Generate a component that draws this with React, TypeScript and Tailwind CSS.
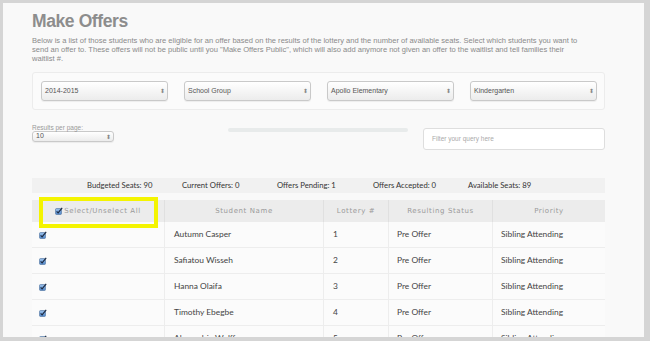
import React from "react";

const Check = () => (
  <svg width="8" height="8" viewBox="0 0 8 8" className="shrink-0">
    <defs>
      <linearGradient id="cb" x1="0" y1="0" x2="0" y2="1">
        <stop offset="0" stopColor="#9cc2ec" />
        <stop offset="1" stopColor="#4f86c9" />
      </linearGradient>
    </defs>
    <rect x="0.5" y="1.5" width="6" height="6" rx="1" fill="url(#cb)" stroke="#4b6e9c" strokeWidth="0.6" />
    <path d="M1.6 4.4 L3.1 5.9 L7.2 0.8" fill="none" stroke="#1d2c44" strokeWidth="1.2" />
  </svg>
);

const Select = ({ label, w = "w-[127px]", h = "h-[20px]" }: { label: string; w?: string; h?: string }) => (
  <div
    className={`${w} ${h} flex items-center rounded-[3px] border border-[#c9c9c9] bg-gradient-to-b from-[#ffffff] to-[#ececec] shadow-[0_1px_1px_rgba(0,0,0,0.06)]`}
  >
    <span className="flex-1 pl-[3px] text-[7px] text-[#555]">{label}</span>
    <span className="flex h-full w-[10px] items-center justify-center text-[6px] leading-none text-[#888]">
      ⬍
    </span>
  </div>
);

const rows = [
  ["Autumn Casper", "1"],
  ["Safiatou Wisseh", "2"],
  ["Hanna Olaifa", "3"],
  ["Timothy Ebegbe", "4"],
  ["Alexandria Wolff", "5"],
];

export default function App() {
  return (
    <div className="h-[341px] w-[650px] overflow-hidden bg-[#d5d5d5] pb-[4px] pl-[3px] pr-[6px] pt-[3px]">
      <div className="h-full overflow-hidden bg-[#f9f9f9] pl-[29px] pr-[39px] font-['Liberation_Sans',sans-serif]">
        <h1 className="mt-[7px] text-[17.5px] font-bold leading-[22px] tracking-[-0.4px] text-[#8d8d8d]">Make Offers</h1>
        <p className="mt-[4px] whitespace-nowrap text-[7.55px] leading-[9px] text-[#8a8a8a]">
          Below is a list of those students who are eligible for an offer based on the results of the lottery and the number of available seats. Select which students you want to
          <br />
          send an offer to. These offers will not be public until you "Make Offers Public", which will also add anymore not given an offer to the waitlist and tell families their
          <br />
          waitlist #.
        </p>

        <div className="mt-[9px] flex h-[38px] items-center gap-[16px] rounded-[3px] border border-[#ececec] bg-[#fbfbfb] pl-[8px]">
          <Select label="2014-2015" />
          <Select label="School Group" />
          <Select label="Apollo Elementary" />
          <Select label="Kindergarten" />
        </div>

        <div className="mt-[13px] flex items-start">
          <div className="w-[196px]">
            <div className="text-[6.5px] leading-[9px] text-[#999]">Results per page:</div>
            <div className="mt-[-1px]">
              <Select label="10" w="w-[82px]" h="h-[11px]" />
            </div>
          </div>
          <div className="mt-[5px] h-[4px] w-[180px] rounded-full bg-[#e8ebeb]" />
          <div className="ml-[15px] mt-[5px] flex h-[22px] flex-1 items-center rounded-[3px] border border-[#dedede] bg-white pl-[8px] text-[6.5px] text-[#aaa]">
            Filter your query here
          </div>
        </div>

        <div className="mt-[28px] grid h-[15px] grid-cols-[95px_95px_96px_95px_95px] items-center bg-[#f1f1f1] pl-[55px] font-['Lato',sans-serif] text-[7.7px] text-[#333]">
          <span>Budgeted Seats: 90</span>
          <span>Current Offers: 0</span>
          <span>Offers Pending: 1</span>
          <span>Offers Accepted: 0</span>
          <span>Available Seats: 89</span>
        </div>

        <div className="relative mt-[7px]">
          <div className="grid h-[22px] grid-cols-[133px_159px_65px_104px_112px] bg-[#ececec] font-['DejaVu_Sans',sans-serif] text-[7px] tracking-[0.6px] text-[#9a9a9a]">
            <div className="flex items-center justify-center gap-[1px] border-r border-[#e0e0e0]">
              <Check />
              <span>Select/Unselect All</span>
            </div>
            <div className="flex items-center justify-center border-r border-[#e0e0e0]">Student Name</div>
            <div className="flex items-center justify-center border-r border-[#e0e0e0]">Lottery #</div>
            <div className="flex items-center justify-center border-r border-[#e0e0e0]">Resulting Status</div>
            <div className="flex items-center justify-center">Priority</div>
          </div>
          {rows.map(([name, n]) => (
            <div
              key={n}
              className="grid h-[26px] grid-cols-[133px_159px_65px_104px_112px] border-b border-[#ededed] bg-[#fbfbfb] font-['Lato',sans-serif] text-[8.4px] text-[#444]"
            >
              <div className="flex items-center border-r border-[#ededed] pl-[7px]">
                <Check />
              </div>
              <div className="flex items-center border-r border-[#ededed] pl-[9px]">{name}</div>
              <div className="flex items-center border-r border-[#ededed] pl-[9px]">{n}</div>
              <div className="flex items-center border-r border-[#ededed] pl-[8px]">Pre Offer</div>
              <div className="flex items-center pl-[8px]">Sibling Attending</div>
            </div>
          ))}
          <div className="absolute left-[7px] top-[-3px] h-[31px] w-[119px] border-[4px] border-[#f4f400]" />
        </div>
      </div>
    </div>
  );
}
